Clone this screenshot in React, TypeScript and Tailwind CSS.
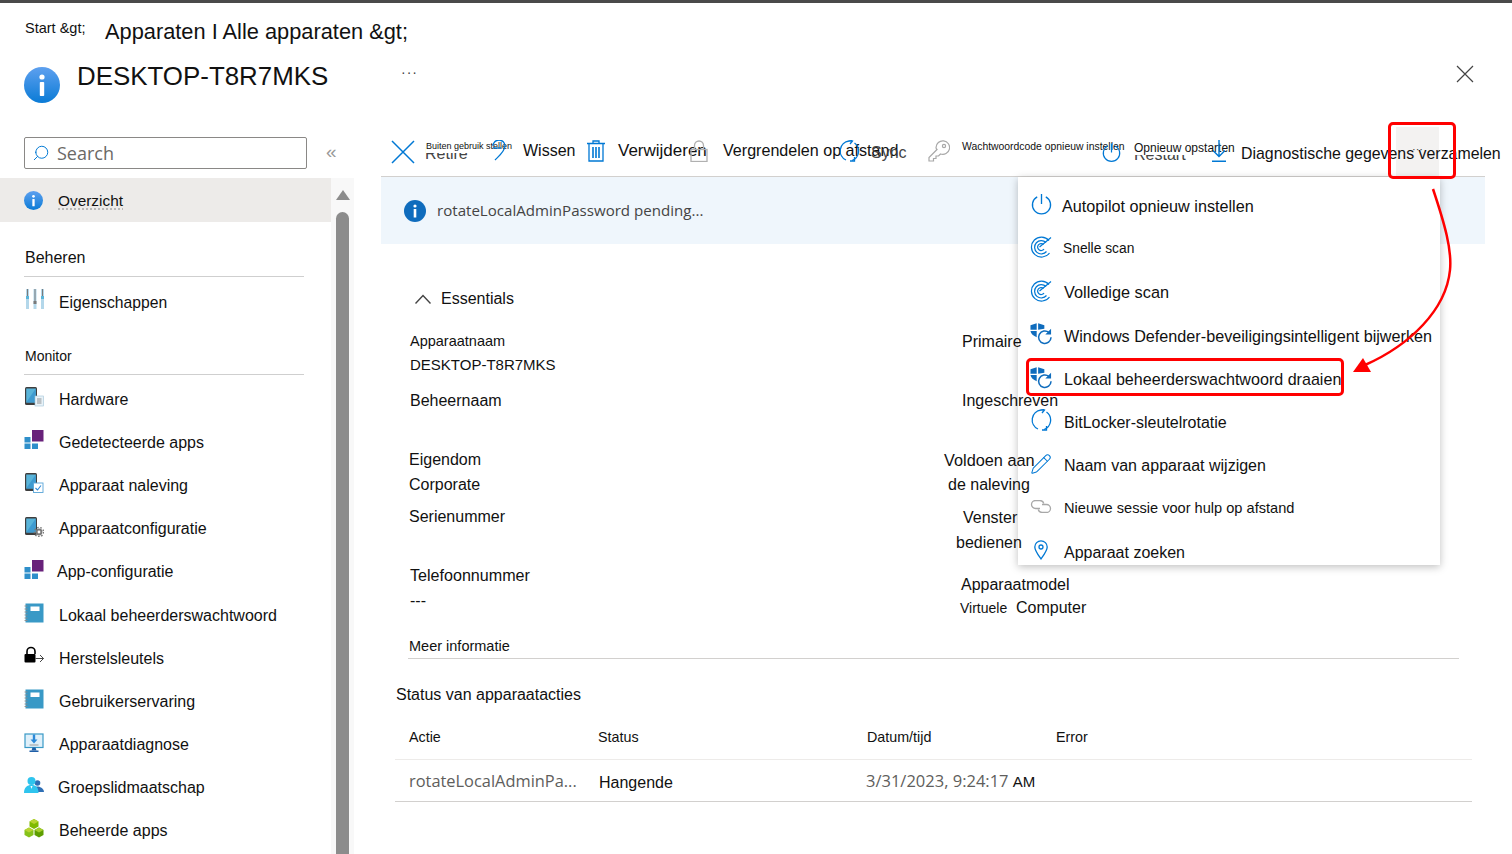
import React from 'react';
import { Pencil, Search } from 'lucide-react';

const InfoIcon = ({ size }: { size: string }) => (
  <svg viewBox="0 0 36 36" className={size}>
    <defs>
      <linearGradient id="infoGrad" x1="0" y1="0" x2="0" y2="1">
        <stop offset="0" stopColor="#5ea0ef" />
        <stop offset="1" stopColor="#0a7bd6" />
      </linearGradient>
    </defs>
    <circle cx="18" cy="18" r="18" fill="url(#infoGrad)" />
    <circle cx="18" cy="10" r="2.6" fill="#fff" />
    <rect x="15.8" y="15" width="4.4" height="14" rx="0.8" fill="#fff" />
  </svg>
);

const Sliders = () => (
  <svg viewBox="0 0 20 20" className="w-[20px] h-[20px]">
    <rect x="1" y="0" width="3" height="20" fill="#b3d7ea" />
    <rect x="8.5" y="0" width="3" height="20" fill="#b3d7ea" />
    <rect x="16" y="0" width="3" height="20" fill="#b3d7ea" />
    <rect x="1" y="7" width="3" height="3" fill="#59b4d9" />
    <rect x="8.5" y="12" width="3" height="3" fill="#7a7a7a" />
    <rect x="16" y="7" width="3" height="3" fill="#59b4d9" />
    <rect x="2" y="0" width="1" height="7" fill="#7a7a7a" />
    <rect x="9.5" y="0" width="1" height="12" fill="#7a7a7a" />
    <rect x="17" y="0" width="1" height="7" fill="#7a7a7a" />
  </svg>
);

const Phone = ({ badge }: { badge: 'doc' | 'check' | 'gear' }) => (
  <svg viewBox="0 0 20 20" className="w-[20px] h-[20px]">
    <rect x="1" y="0" width="12" height="18" rx="1.5" fill="#3e3e3e" />
    <rect x="2.2" y="1.5" width="9.6" height="14" fill="#59b4d9" />
    <path d="M11.8 1.5 2.2 15.5h9.6z" fill="#3f9bd0" />
    {badge === 'doc' && (
      <g>
        <rect x="11" y="9" width="8.5" height="10" fill="#e8f2f8" stroke="#a0c4d8" strokeWidth="0.6" />
        <path d="M13 12h4.5M13 14h4.5M13 16h4.5" stroke="#7a7a7a" strokeWidth="0.8" />
      </g>
    )}
    {badge === 'check' && (
      <g>
        <rect x="9.5" y="10" width="9.5" height="9.5" fill="#fff" stroke="#59a5d8" strokeWidth="0.9" />
        <path d="m11.5 15 2 2 3.5-4.5" fill="none" stroke="#2b88d8" strokeWidth="1.1" />
      </g>
    )}
    {badge === 'gear' && (
      <g>
        <circle cx="15" cy="15" r="3.4" fill="#7a7a7a" />
        <circle cx="15" cy="15" r="4.6" fill="none" stroke="#7a7a7a" strokeWidth="1.4" strokeDasharray="1.6 1.6" />
        <circle cx="15" cy="15" r="1.4" fill="#fff" />
      </g>
    )}
  </svg>
);

const Apps = () => (
  <svg viewBox="0 0 20 20" className="w-[20px] h-[20px]">
    <rect x="8" y="0" width="11.5" height="11.5" fill="#68217a" />
    <rect x="0.5" y="7" width="6" height="5.5" fill="#2f8fca" />
    <rect x="0.5" y="13.5" width="6" height="5.5" fill="#2f8fca" />
    <rect x="8" y="13.5" width="6" height="5.5" fill="#2f8fca" />
  </svg>
);

const Book = () => (
  <svg viewBox="0 0 20 20" className="w-[20px] h-[20px]">
    <rect x="1.5" y="0.5" width="18" height="19" fill="#3999c6" />
    <rect x="6.5" y="3.5" width="9" height="4.5" fill="#fff" />
    <path d="M0.5 3h3M0.5 6h3M0.5 9h3M0.5 12h3M0.5 15h3M0.5 17.5h3" stroke="#8a8a8a" strokeWidth="0.9" />
  </svg>
);

const LockArrow = () => (
  <svg viewBox="0 0 20 20" className="w-[20px] h-[20px]">
    <path d="M3 8V5.5a4 4 0 0 1 8 0V8" fill="none" stroke="#000" strokeWidth="1.6" />
    <rect x="0.5" y="8" width="11" height="8.5" rx="1" fill="#000" />
    <path d="M11.5 12.5h8M16 9l3.5 3.5L16 16" fill="none" stroke="#333" strokeWidth="0.9" />
  </svg>
);

const Monitor = () => (
  <svg viewBox="0 0 20 20" className="w-[20px] h-[20px]">
    <rect x="1" y="1" width="18" height="13.5" fill="#dff0fa" stroke="#3999c6" strokeWidth="1.2" />
    <path d="M10 1.5v6" stroke="#2b88d8" strokeWidth="2.4" />
    <path d="m6.5 6.5 3.5 4 3.5-4z" fill="#2b88d8" />
    <path d="M5.5 12h9" stroke="#9a9a9a" strokeWidth="1" />
    <path d="M8.5 14.5h3l1 3h-5z" fill="#1e5fa8" />
    <rect x="5.5" y="17.5" width="9" height="1.5" fill="#1e5fa8" />
  </svg>
);

const Group = () => (
  <svg viewBox="0 0 20 20" className="w-[20px] h-[20px]">
    <circle cx="13.5" cy="7" r="2.8" fill="#2f6fb5" />
    <path d="M10 16c0-4 1.5-5.5 3.5-5.5S19.8 12 20 16z" fill="#2f6fb5" />
    <circle cx="7.5" cy="5" r="4" fill="#2fc4ee" />
    <path d="M0 17c0-5.5 3-8 7.5-8s7 2.5 7 8z" fill="#2fc4ee" />
    <path d="m6.5 10 1 3 1-3z" fill="#fff" />
  </svg>
);

const Cubes = () => (
  <svg viewBox="0 0 20 20" className="w-[20px] h-[20px]">
    <path d="M10 0l4.500 2.500v5L10 10 5.500 7.500v-5z" fill="#7fba00" />
    <path d="M5 8.500l4.500 2.500v5L5 18.500.5 16v-5z" fill="#86c21a" />
    <path d="M15 8.500l4.500 2.500v5L15 18.500 10.500 16v-5z" fill="#5e9e00" />
    <path d="M10 0l4.500 2.500L10 5 5.500 2.500z" fill="#b8d432" />
    <path d="M5 8.500l4.500 2.500L5 13.500.5 11z" fill="#b8d432" />
    <path d="M15 8.500l4.500 2.500-4.500 2.500-4.500-2.500z" fill="#a5ce2c" />
  </svg>
);

const Radar = () => (
  <svg viewBox="0 0 22 22" className="w-[22px] h-[22px]" fill="none" stroke="#0078d4" strokeWidth="1.2">
    <path d="M19 4.500A10 10 0 1 0 19.500 17" />
    <path d="M16 6.500A6.700 6.700 0 1 0 16.500 15.500" />
    <path d="M13.500 8.500A3.500 3.500 0 1 0 14 13" />
    <path d="M9.500 11 21 1.500" />
  </svg>
);

const ShieldSync = () => (
  <svg viewBox="0 0 23 23" className="w-[23px] h-[23px]">
    <path d="M0.500 3 7 0.800V7.500H0.500z" fill="#0f6cbd" />
    <path d="M8.500 0.800 15 3V6.500L8.500 7.500z" fill="#0f6cbd" />
    <path d="M0.500 9H7V15.500C3.500 14 1 12 0.500 9z" fill="#0f6cbd" />
    <path d="M19.800 10.500A6.500 6.500 0 1 0 22 15.500" fill="none" stroke="#0f6cbd" strokeWidth="1.600" />
    <path d="M22 6.500V12.500H16z" fill="#0f6cbd" />
  </svg>
);

const SyncArrows = ({ size }: { size: string }) => (
  <svg viewBox="0 0 22 22" className={size} fill="none" stroke="#0078d4" strokeWidth="1.300">
    <path d="M8 20A10 10 0 0 1 11 1h3" />
    <path d="M14 20.500A10 10 0 0 0 16.500 3" />
    <path d="M11 -0.500 14.500 1 12 4" />
    <path d="M16.500 17v4h-4.500" />
  </svg>
);

const PowerIcon = ({ size }: { size: string }) => (
  <svg viewBox="0 0 22 22" className={size} fill="none" stroke="#0078d4" strokeWidth="1.400">
    <path d="M11 0.500V11" />
    <path d="M6.500 3.500a9.500 9.500 0 1 0 9 0" />
  </svg>
);

const Pin = () => (
  <svg viewBox="0 0 14 20" className="w-[14px] h-[20px]" fill="none" stroke="#0078d4" strokeWidth="1.300">
    <path d="M7 19C3.500 14 0.800 10.500 0.800 7a6.200 6.200 0 0 1 12.400 0C13.200 10.500 10.500 14 7 19z" />
    <circle cx="7" cy="7" r="2" />
  </svg>
);

const LinkOvals = () => (
  <svg viewBox="0 0 22 13" className="w-[22px] h-[13px]" fill="none" stroke="#a8a8a8" strokeWidth="1.300">
    <path d="M10 8.500H5.500a4 4 0 0 1 0-8H10a4 4 0 0 1 3.800 3" />
    <path d="M12 4.500H16.500a4 4 0 0 1 0 8H12a4 4 0 0 1-3.800-3" />
  </svg>
);

const navItems = [
  { label: 'Hardware', icon: <Phone badge="doc" />, ml: 'ml-[15px]' },
  { label: 'Gedetecteerde apps', icon: <Apps />, ml: 'ml-[15px]' },
  { label: 'Apparaat naleving', icon: <Phone badge="check" />, ml: 'ml-[15px]' },
  { label: 'Apparaatconfiguratie', icon: <Phone badge="gear" />, ml: 'ml-[15px]' },
  { label: 'App-configuratie', icon: <Apps />, ml: 'ml-[13px]' },
  { label: 'Lokaal beheerderswachtwoord', icon: <Book />, ml: 'ml-[15px]' },
  { label: 'Herstelsleutels', icon: <LockArrow />, ml: 'ml-[15px]' },
  { label: 'Gebruikerservaring', icon: <Book />, ml: 'ml-[15px]' },
  { label: 'Apparaatdiagnose', icon: <Monitor />, ml: 'ml-[15px]' },
  { label: 'Groepslidmaatschap', icon: <Group />, ml: 'ml-[14px]' },
  { label: 'Beheerde apps', icon: <Cubes />, ml: 'ml-[15px]' },
];

const menuItems = [
  { label: 'Autopilot opnieuw instellen', icon: <PowerIcon size="w-[21px] h-[22px]" />, cls: 'ml-[10px] text-[16.2px]' },
  { label: 'Snelle scan', icon: <Radar />, cls: 'ml-[11px] -mt-[2px] text-[13.8px]' },
  { label: 'Volledige scan', icon: <Radar />, cls: 'ml-[12px] -mt-[2px] text-[16.3px]' },
  { label: 'Windows Defender-beveiligingsintelligent bijwerken', icon: <ShieldSync />, cls: 'ml-[12px] text-[16.2px]' },
  { label: 'Lokaal beheerderswachtwoord draaien', icon: <ShieldSync />, cls: 'ml-[12px] -mt-[2px] text-[16.1px]' },
  { label: 'BitLocker-sleutelrotatie', icon: <SyncArrows size="w-[22px] h-[22px]" />, cls: 'ml-[12px] text-[16px]' },
  { label: 'Naam van apparaat wijzigen', icon: <Pencil className="w-[24px] h-[24px] text-[#0078d4]" strokeWidth={1.100} />, cls: 'ml-[12px] text-[16px]' },
  { label: 'Nieuwe sessie voor hulp op afstand', icon: <LinkOvals />, cls: 'ml-[12px] text-[14.6px]' },
  { label: 'Apparaat zoeken', icon: <Pin />, cls: 'ml-[12px] text-[16px]' },
];

const App: React.FC = () => {
  return (
    <div className="relative w-[1512px] h-[854px] overflow-hidden bg-white text-[#111] font-['Liberation_Sans',sans-serif]">
      <div className="h-[3px] bg-[#4a4a4a]" />

      {/* Breadcrumb */}
      <div className="flex items-center h-[47px] pl-[25px] pt-[11px]">
        <span className="w-[80px] text-[14.5px] -mt-[6px]">Start {'&gt;'}</span>
        <span className="text-[21.8px]">Apparaten I Alle apparaten {'&gt;'}</span>
      </div>

      {/* Title */}
      <div className="relative flex h-[72px] pl-[24px]">
        <div className="mt-[17px]"><InfoIcon size="w-[36px] h-[36px]" /></div>
        <span className="ml-[17px] mt-[9px] text-[25.9px] leading-[34px] w-[324px]">DESKTOP-T8R7MKS</span>
        <span className="mt-[12px] text-[14px] tracking-[1px] text-[#444]">···</span>
        <svg viewBox="0 0 18 18" className="absolute left-[1456px] top-[15px] w-[18px] h-[18px]" fill="none" stroke="#444" strokeWidth="1.200">
          <path d="M1 1 17 17M17 1 1 17" />
        </svg>
      </div>

      <div className="flex h-[732px]">
        {/* Sidebar */}
        <div className="w-[331px] shrink-0 pt-[15px]">
          <div className="flex items-center pl-[24px]">
            <div className="flex items-center shrink-0 w-[283px] h-[32px] border border-[#8a8886] rounded-[2px] pl-[7px]">
              <Search className="w-[18px] h-[18px] text-[#0078d4] -scale-x-100" strokeWidth={1.300} />
              <span className="ml-[7px] text-[18px] text-[#6b6966] font-['Open_Sans',sans-serif]">Search</span>
            </div>
            <span className="ml-[19px] text-[19px] leading-none text-[#9a9a9a] -mt-[3px]">«</span>
          </div>
          <div className="flex items-center h-[44px] mt-[9px] pl-[24px] bg-[#edebe9]">
            <InfoIcon size="w-[19px] h-[19px]" />
            <span className="ml-[15px] mt-[2px] text-[15.4px] underline decoration-dotted decoration-[#aaa] underline-offset-2">Overzicht</span>
          </div>
          <div className="mx-[24px] w-[280px] mt-[24px] h-[31px] border-b border-[#cfcfcf] text-[16px] leading-[24px] pl-[1px]">Beheren</div>
          <div className="flex items-center h-[43px] pl-[25px] mt-[4px]">
            <div className="-mt-[8px]"><Sliders /></div>
            <span className="ml-[14px] text-[15.7px]">Eigenschappen</span>
          </div>
          <div className="mx-[24px] w-[280px] mt-[20px] h-[31px] border-b border-[#cfcfcf] text-[14px] leading-[24px] pl-[1px]">Monitor</div>
          <div className="mt-[3px]">
            {navItems.map((item) => (
              <div key={item.label} className="flex items-center h-[43.2px] pl-[24px]">
                <div className="-mt-[5px]">{item.icon}</div>
                <span className={`${item.ml} text-[16px]`}>{item.label}</span>
              </div>
            ))}
          </div>
        </div>

        {/* Scrollbar */}
        <div className="w-[23px] shrink-0 mt-[56px] bg-[#f8f8f8] flex flex-col items-center">
          <div className="mt-[12px] w-0 h-0 border-l-[7px] border-r-[7px] border-b-[10px] border-l-transparent border-r-transparent border-b-[#8c8c8c]" />
          <div className="mt-[12px] w-[13px] flex-1 rounded-t-[7px] bg-[#8c8c8c]" />
        </div>

        {/* Main */}
        <div className="ml-[27px] w-[1104px] shrink-0">
          {/* Toolbar */}
          <div className="relative flex h-[55px] border-b border-[#d2d0ce] pl-[10px] pt-[18px]">
            <div className="relative w-[99px] h-[24px]">
              <svg viewBox="0 0 24 24" className="w-[24px] h-[24px]" fill="none" stroke="#0078d4" strokeWidth="1.500">
                <path d="M1 1 23 23M23 1 1 23" />
              </svg>
              <span className="absolute left-[34px] top-[4px] text-[16px] leading-[20px] text-[#444]">Retire</span>
              <span className="absolute left-[35px] top-[0px] h-[13px] pr-[1px] bg-white text-[9px] leading-[12px] whitespace-nowrap">Buiten gebruik stellen</span>
            </div>
            <div className="relative w-[97px] h-[24px]">
              <svg viewBox="0 0 22 22" className="relative z-10 w-[22px] h-[22px]" fill="none" stroke="#0078d4" strokeWidth="1.300">
                <path d="M3 6a6 6 0 1 1 12 0c0 5-5 9-10 14" />
                <path d="M3 8h8" />
              </svg>
              <span className="absolute left-[33px] top-[1px] bg-white text-[16px] leading-[20px]">Wissen</span>
            </div>
            <div className="relative w-[103px] h-[24px]">
              <svg viewBox="0 0 18 22" className="w-[18px] h-[22px]" fill="none" stroke="#0078d4" strokeWidth="1.300">
                <path d="M0 3.500H18M6 3.500V1h6v2.500M2 3.500V21h14V3.500" />
                <path d="M6 7v11M9 7v11M12 7v11" strokeWidth="1.600" />
              </svg>
              <span className="absolute left-[31px] top-[4px] text-[16px] leading-[20px] text-[#444]">Delete</span>
              <span className="absolute left-[31px] top-[1px] h-[18px] bg-white text-[17px] leading-[20px] whitespace-nowrap">Verwijderen</span>
            </div>
            <div className="relative w-[148px] h-[24px]">
              <svg viewBox="0 0 18 22" className="relative z-10 w-[18px] h-[22px]" fill="none" stroke="#b0b0b0" strokeWidth="1.300">
                <rect x="1" y="9.500" width="16" height="12" />
                <path d="M4.500 9.500V5.500a4.500 4.500 0 0 1 9 0V9.500" />
              </svg>
              <span className="absolute left-[33px] top-[4px] text-[16px] leading-[20px] text-[#999]">Remote lock</span>
              <span className="absolute left-[33px] top-[0px] h-[19px] pr-[1px] bg-white text-[16.1px] leading-[20px] whitespace-nowrap">Vergrendelen op afstand</span>
            </div>
            <div className="relative w-[90px] h-[24px]">
              <div className="relative z-10"><SyncArrows size="w-[22px] h-[22px]" /></div>
              <span className="absolute z-10 left-[33px] top-[3px] text-[16px] leading-[20px] text-[#444]">Sync</span>
            </div>
            <div className="relative w-[174px] h-[24px]">
              <svg viewBox="0 0 22 22" className="w-[22px] h-[22px]" fill="none" stroke="#a8a8a8" strokeWidth="1.200">
                <path d="M9 9.500 1 17.500V21H5.500V18.500H8V16H10.500L12.500 14A6.800 6.800 0 1 0 8 7.500C8 8.200 8.300 9 9 9.500z" />
                <circle cx="16" cy="6" r="1.600" />
              </svg>
              <span className="absolute left-[34px] top-[1px] h-[14px] text-[10.400px] leading-[12px] whitespace-nowrap bg-white">Wachtwoordcode opnieuw instellen</span>
            </div>
            <div className="relative w-[108px] h-[24px]">
              <PowerIcon size="w-[19px] h-[21px] mt-[2px]" />
              <span className="absolute left-[32px] top-[5px] text-[16px] leading-[20px] text-[#444]">Restart</span>
              <span className="absolute left-[32px] top-[0px] h-[15px] bg-white text-[12px] leading-[16px] whitespace-nowrap">Opnieuw opstarten</span>
            </div>
            <div className="relative w-[186px] h-[24px]">
              <svg viewBox="0 0 14 22" className="relative z-10 ml-[2px] w-[14px] h-[22px]" fill="none" stroke="#0078d4" strokeWidth="1.400">
                <path d="M7 0V16M1 10.500 7 16.500 13 10.500" />
                <path d="M0 21.300H14" strokeWidth="1.600" />
              </svg>
            </div>
            <div className="flex justify-center w-[43px] h-[50px] -mt-[13px] bg-[#f3f2f1] pt-[14px] text-[11px] text-[#444]">···</div>
            <span className="absolute left-[860px] top-[20px] text-[15.9px] leading-[24px] whitespace-nowrap">Diagnostische gegevens verzamelen</span>
          </div>

          {/* Notification */}
          <div className="flex items-center h-[67px] pl-[23px] bg-[#eff6fc]">
            <svg viewBox="0 0 22 22" className="w-[22px] h-[22px]">
              <circle cx="11" cy="11" r="11" fill="#0f6cbd" />
              <circle cx="11" cy="6" r="1.600" fill="#fff" />
              <rect x="9.700" y="9" width="2.600" height="8.500" fill="#fff" />
            </svg>
            <span className="ml-[11px] text-[15.100px] text-[#444] font-['Open_Sans',sans-serif]">rotateLocalAdminPassword pending...</span>
          </div>

          {/* Essentials */}
          <div className="flex items-center h-[24px] mt-[43px] pl-[34px]">
            <svg viewBox="0 0 16 10" className="w-[16px] h-[10px]" fill="none" stroke="#444" strokeWidth="1.400">
              <path d="M0.500 9.500 8 1.500 15.500 9.500" />
            </svg>
            <span className="ml-[10px] text-[16px]">Essentials</span>
          </div>
          <div className="flex mt-[18px] pl-[28px] h-[291px]">
            <div className="w-[535px] shrink-0 text-[14.500px] leading-[24px]">
              <div className="ml-[1px]">Apparaatnaam</div>
              <div className="ml-[1px] text-[15px]">DESKTOP-T8R7MKS</div>
              <div className="ml-[1px] mt-[12px] text-[16px]">Beheernaam</div>
              <div className="mt-[35px] text-[16px]">Eigendom</div>
              <div className="mt-[1px] text-[16px]">Corporate</div>
              <div className="mt-[8px] text-[16px]">Serienummer</div>
              <div className="ml-[1px] mt-[34px] text-[16.100px]">Telefoonnummer</div>
              <div className="ml-[1px] mt-[2px] text-[16px]">---</div>
            </div>
            <div className="relative z-20 text-[16px] leading-[24px]">
              <div className="ml-[18px] mt-[1px]">Primaire</div>
              <div className="ml-[18px] mt-[35px]">Ingeschreven</div>
              <div className="mt-[35px] text-[16.3px]">Voldoen aan</div>
              <div className="ml-[4px] mt-[1px]">de naleving</div>
              <div className="ml-[19px] mt-[9px]">Venster</div>
              <div className="ml-[12px] mt-[1px]">bedienen</div>
              <div className="ml-[17px] mt-[18px]">Apparaatmodel</div>
              <div className="ml-[16px] -mt-[1px] flex items-center">
                <span className="text-[14px] w-[56px]">Virtuele</span>
                <span>Computer</span>
              </div>
            </div>
          </div>

          {/* More info */}
          <div className="ml-[27px] w-[1051px] h-[25px] mt-[14px] border-b border-[#d2d0ce] text-[14.500px] leading-[24px] pl-[1px]">Meer informatie</div>
          <div className="ml-[15px] mt-[24px] text-[16px] leading-[24px]">Status van apparaatacties</div>
          <div className="ml-[14px] w-[1077px] mt-[9px]">
            <div className="grid grid-cols-[203px_269px_189px_1fr] items-center h-[44px] border-b border-[#edebe9] text-[14.300px]">
              <span className="pl-[14px]">Actie</span>
              <span>Status</span>
              <span>Datum/tijd</span>
              <span>Error</span>
            </div>
            <div className="grid grid-cols-[203px_269px_189px_1fr] items-center h-[42px] border-b border-[#d2d0ce]">
              <span className="pl-[14px] mt-[2px] text-[16.400px] text-[#605e5c] font-['Open_Sans',sans-serif] whitespace-nowrap">rotateLocalAdminPa...</span>
              <span className="pl-[1px] mt-[5px] text-[16px]">Hangende</span>
              <span className="-ml-[1px] mt-[2px] text-[16.500px] text-[#605e5c] font-['Open_Sans',sans-serif] whitespace-nowrap">
                3/31/2023, 9:24:17 <span className="text-[15px] text-[#111] font-['Liberation_Sans',sans-serif]">AM</span>
              </span>
              <span />
            </div>
          </div>
        </div>
      </div>

      {/* Actions menu */}
      <div className="absolute z-10 left-[1018px] top-[177px] w-[422px] h-[388px] bg-white shadow-[0_2px_8px_rgba(0,0,0,0.25)] pt-[8px] pl-[12px]">
        {menuItems.map((item) => (
          <div key={item.label} className="flex items-center h-[43.250px]">
            <div className="w-[22px] flex justify-center -mt-[5px]">{item.icon}</div>
            <span className={`${item.cls} whitespace-nowrap`}>{item.label}</span>
          </div>
        ))}
      </div>

      {/* Annotations */}
      <div className="absolute z-30 left-[1388px] top-[122px] w-[68px] h-[57px] border-[3px] border-[#f00] rounded-[5px]" />
      <div className="absolute z-30 left-[1026px] top-[358px] w-[318px] h-[38px] border-[3px] border-[#f00] rounded-[5px]" />
      <svg viewBox="0 0 1512 854" className="absolute z-30 inset-0 w-[1512px] h-[854px] pointer-events-none">
        <path d="M1433 189C1445 225 1452 250 1450 270C1446 310 1410 345 1365 365" fill="none" stroke="#f00" strokeWidth="2.500" />
        <path d="M1353 372 1363 358 1371 372z" fill="#f00" />
      </svg>
    </div>
  );
};

export default App;
